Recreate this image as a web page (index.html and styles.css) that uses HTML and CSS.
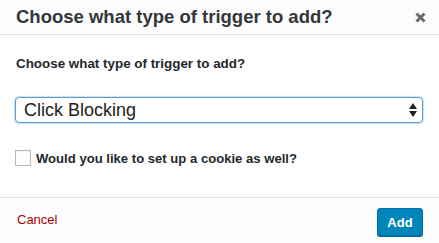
FILE: index.html
```html
<!DOCTYPE html>
<html lang="en">
<head>
  <meta charset="UTF-8" />
  <title>Add trigger</title>
  <link rel="stylesheet" href="styles.css">
</head>
<body>
  <div class="modal">
    <div class="modal-header">
      <h2 class="modal-title">Choose what type of trigger to add?</h2>
      <span class="modal-close">
        <svg width="11" height="11" viewBox="0 0 11 11"><path d="M1.5 1.5L9.5 9.5M9.5 1.5L1.5 9.5" stroke="#6a6a6a" stroke-width="3"/></svg>
      </span>
    </div>
    <div class="modal-body">
      <p class="field-label">Choose what type of trigger to add?</p>
      <div class="select">
        <span class="select-value">Click Blocking</span>
        <svg class="select-arrows" width="8" height="14" viewBox="0 0 8 14"><path d="M4 0L8 6H0Z M0 8H8L4 14Z" fill="#222"/></svg>
      </div>
      <label class="check-row">
        <span class="checkbox"></span>
        <span class="check-label">Would you like to set up a cookie as well?</span>
      </label>
    </div>
    <div class="modal-footer">
      <a class="cancel" href="#">Cancel</a>
      <button class="btn-primary">Add</button>
    </div>
  </div>
</body>
</html>
```

FILE: styles.css
```css
* { box-sizing: border-box; margin: 0; padding: 0; }
html, body { width: 100%; height: 100%; background: #fff; font-family: "Liberation Sans", Arial, sans-serif; color: #23282d; }
.modal { width: 439px; height: 243px; display: flex; flex-direction: column; }
.modal-header { height: 35px; background: #fcfcfc; border-bottom: 1px solid #ddd; display: flex; align-items: center; justify-content: space-between; padding: 0 13px 0 16px; }
.modal-title { font-size: 18.5px; font-weight: bold; color: #32373c; }
.modal-close { display: flex; width: 11px; height: 11px; margin-top: 1px; }
.modal-body { flex: 1; padding: 21px 16px 0 15px; }
.field-label { font-size: 13.4px; font-weight: bold; padding-left: 1px; color: #23282d; }
.select { margin-top: 26px; height: 26px; width: 408px; border: 1px solid #5b9dd9; border-radius: 4px; box-shadow: 0 0 2px rgba(30,140,190,.8); display: flex; align-items: center; justify-content: space-between; padding: 0 5px 0 8px; }
.select-value { font-size: 18px; color: #222; }
.check-row { display: flex; align-items: center; margin-top: 27px; }
.checkbox { width: 16px; height: 16px; border: 1px solid #b4b9be; background: #fff; box-shadow: inset 0 1px 2px rgba(0,0,0,.07); }
.check-label { font-size: 13.1px; font-weight: bold; margin-left: 5px; margin-top: 1px; }
.modal-footer { height: 46px; background: #fcfcfc; border-top: 1px solid #ddd; display: flex; align-items: center; justify-content: space-between; padding: 0 16px 0 17px; }
.cancel { color: #a00; font-size: 13px; text-decoration: none; margin-top: -3px; }
.btn-primary { width: 46px; height: 28px; background: #0085ba; border: 1px solid #0073aa; border-radius: 3px; box-shadow: 0 1px 0 #006799; color: #fff; font-family: inherit; font-size: 13px; font-weight: bold; margin-top: 3px; }
```
